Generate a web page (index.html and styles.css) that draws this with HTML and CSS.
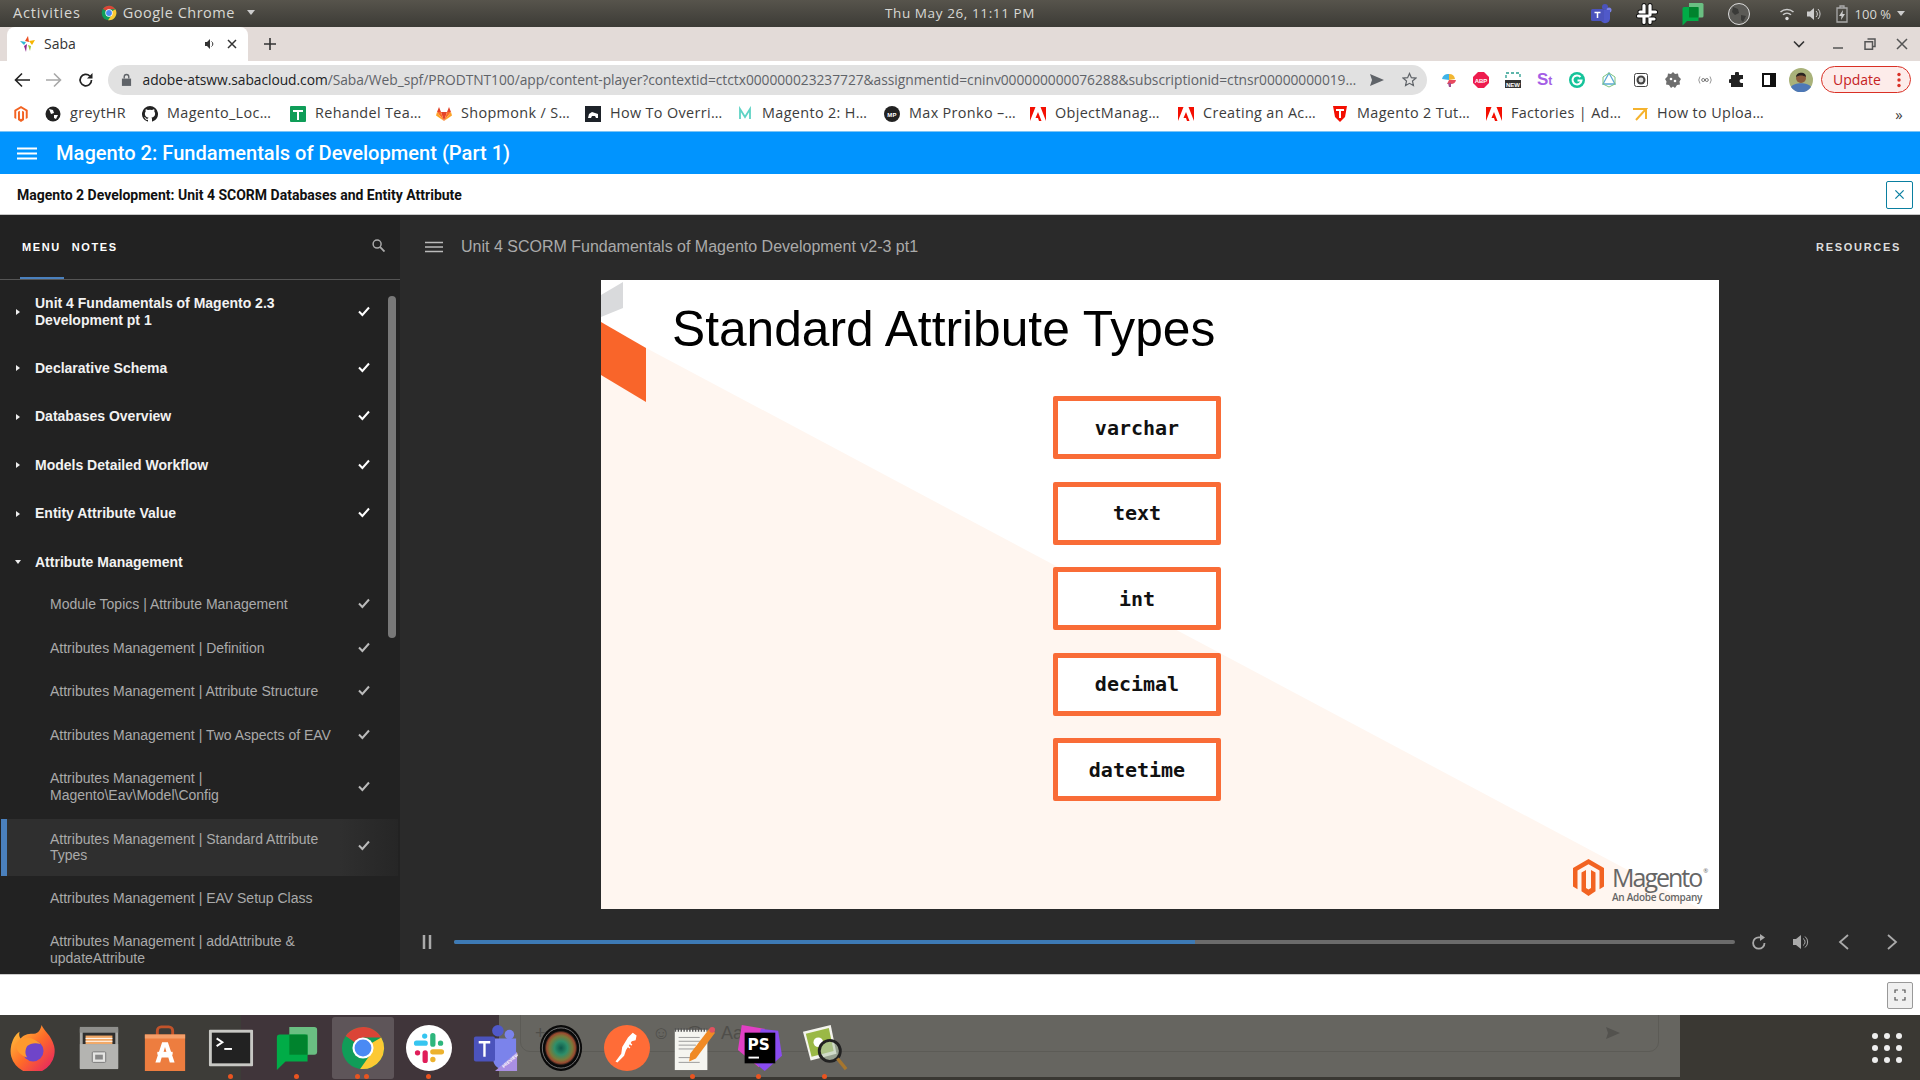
FILE: index.html
```html
<!DOCTYPE html>
<html lang="en">
<head>
<meta charset="utf-8">
<title>Saba</title>
<link rel="stylesheet" href="styles.css">
</head>
<body>
<svg class="defs" aria-hidden="true">
  <symbol id="check" viewBox="0 0 14 14"><path d="M2 7.5 5.4 11 12 3.5" fill="none" stroke="currentColor" stroke-width="2"/></symbol>
  <symbol id="mage" viewBox="0 0 31 37"><path fill="#f26322" d="M15.5 0 31 9v18.5l-4.500 2.700V11.500L15.500 5.200 4.500 11.500v18.700L0 27.500V9z"/><path fill="#f26322" d="M8.500 13.500 13 11v18l2.500 1.500L18 29V11l4.500 2.500v18.700L15.500 37l-7-4.800z"/></symbol>
  <symbol id="adobe" viewBox="0 0 16 16"><path fill="#f40f02" d="M0 1h5.500L0 15zM10.500 1H16v14zM8 6l3.500 9H9l-1-3H5.500z"/></symbol>
  <symbol id="chromelogo" viewBox="0 0 48 48">
    <circle cx="24" cy="24" r="22" fill="#109d58"/>
    <path fill="#db4437" d="M24 24 5.900 11.500A22 22 0 0 1 43.050 13H24z"/>
    <path fill="#fcc934" d="M24 24 43.050 13A22 22 0 0 1 21 45.800L30 33z"/>
    <circle cx="24" cy="24" r="11" fill="#fff"/><circle cx="24" cy="24" r="8.800" fill="#4a8af4"/>
  </symbol>
  <symbol id="gchat" viewBox="0 0 48 48">
    <path fill="#6abf82" d="M16 2h26a3 3 0 0 1 3 3v23a3 3 0 0 1-3 3H16z"/>
    <path fill="#00ac47" d="M3 13a3 3 0 0 1 3-3h26a3 3 0 0 1 3 3v25H12L3 47z"/>
    <path fill="#00832d" d="M16 10h19v21H16z"/>
  </symbol>
</svg>

<header class="topbar">
  <div class="top-left">
    <span>Activities</span>
    <span class="appname"><svg class="i15"><use href="#chromelogo"/></svg>Google Chrome<i class="caret-down"></i></span>
  </div>
  <div class="clock">Thu May 26, 11:11 PM</div>
  <div class="tray">
    <svg class="tray-i" viewBox="0 0 24 24"><circle cx="16" cy="5" r="3" fill="#4b53bc"/><circle cx="20" cy="8" r="2.500" fill="#7b83eb"/><path fill="#5059c9" d="M12 8h9v9a5 5 0 0 1-9 2z"/><rect x="2" y="7" width="13" height="12" rx="1.500" fill="#4b53bc"/><path stroke="#fff" stroke-width="1.500" d="M5.500 10.500h6M8.500 10.500V16"/></svg>
    <svg class="tray-i" viewBox="0 0 24 24"><g fill="none" stroke="#111" stroke-width="5" stroke-linecap="round"><path d="M9 3.500v6.500H5M15 3.500V13M20.500 10H15M3.500 14H13M9 14v6.500M15 20.500V17h4"/></g><g fill="none" stroke="#fff" stroke-width="3.200" stroke-linecap="round"><path d="M9 3.500v6.500H5M15 3.500V13M20.500 10H15M3.500 14H13M9 14v6.500M15 20.500V17h4"/></g></svg>
    <svg class="tray-i" viewBox="0 0 48 48"><use href="#gchat"/></svg>
    <svg class="tray-i" viewBox="0 0 24 24"><circle cx="12" cy="12" r="10.500" fill="#5b5a56" stroke="#ddd" stroke-width="1"/><path fill="#3a3a38" d="M6 5l5 2 1 4-4 2-3-3zM14 13l5 1-3 6-2-2z"/></svg>
    <svg class="tray-s wifi" viewBox="0 0 16 16"><g fill="none" stroke="#ccc" stroke-width="1.500"><path d="M1.500 6a9.500 9.500 0 0 1 13 0M4 8.800a6 6 0 0 1 8 0"/></g><circle cx="8" cy="12.500" r="1.700" fill="#ddd"/></svg>
    <svg class="tray-s vol" viewBox="0 0 16 16"><path fill="#ccc" d="M1 5.500h3L8 2v12L4 10.500H1z"/><path fill="none" stroke="#ccc" d="M10 5a4 4 0 0 1 0 6M12 3a7 7 0 0 1 0 10"/></svg>
    <svg class="tray-s bat" viewBox="0 0 12 18"><path fill="none" stroke="#aaa" stroke-width="1.300" d="M1 3h10v14H1zM4 3V1h4v2"/><path fill="#ccc" d="M7 5 3 11h2.500L5 15l4-6H6.500z"/></svg>
    <span class="pct">100 %</span><i class="caret-down"></i>
  </div>
</header>

<div class="tabstrip">
  <div class="tab">
    <svg class="i16" viewBox="0 0 16 16"><path fill="#ec4e20" d="M8 0l1 6-4-1z"/><path fill="#2bb6d4" d="M0 5l6 1-2 3z"/><path fill="#f7b500" d="M9 5l6-1-3 5z"/><path fill="#8e2a8e" d="M4 10l3-2-1 8z"/><path fill="#9dc83c" d="M8 9l3 1-1 5z"/></svg>
    <span class="tab-title">Saba</span>
    <svg class="tab-sound" viewBox="0 0 12 12"><path fill="#333" d="M1 4h2l3-3v10L3 8H1z"/><path fill="none" stroke="#333" d="M7.500 3.500a3 3 0 0 1 0 5"/></svg>
    <svg class="tab-x" viewBox="0 0 10 10"><path stroke="#333" stroke-width="1.500" d="M1 1l8 8M9 1 1 9"/></svg>
  </div>
  <svg class="newtab" viewBox="0 0 12 12"><path stroke="#333" stroke-width="1.600" d="M6 0v12M0 6h12"/></svg>
  <div class="win-ctrls">
    <svg class="w12 chev" viewBox="0 0 12 12"><path fill="none" stroke="#333" stroke-width="1.600" d="M1 3.500 6 8.500 11 3.500"/></svg>
    <svg class="w12" viewBox="0 0 12 12"><path stroke="#555" stroke-width="1.500" d="M1 10h10"/></svg>
    <svg class="w12" viewBox="0 0 12 12"><path fill="none" stroke="#555" stroke-width="1.500" d="M3.500 1h7.500v7.500H8.500M1 3.800h7.500v7.500H1z"/></svg>
    <svg class="w12" viewBox="0 0 12 12"><path stroke="#555" stroke-width="1.500" d="M1 1l10 10M11 1 1 11"/></svg>
  </div>
</div>

<div class="toolbar">
  <svg class="nav" viewBox="0 0 16 16"><path fill="none" stroke="#222" stroke-width="1.600" d="M8 1.500 1.500 8 8 14.500M2 8h14"/></svg>
  <svg class="nav" viewBox="0 0 16 16"><path fill="none" stroke="#a8a8a8" stroke-width="1.600" d="M8 1.500 14.500 8 8 14.500M14 8H0"/></svg>
  <svg class="nav" viewBox="0 0 16 16"><path fill="none" stroke="#222" stroke-width="1.700" d="M13.500 8a5.700 5.700 0 1 1-1.700-4"/><path fill="#222" d="M14.500 1v5.500H9z"/></svg>
  <div class="omnibox">
    <svg class="lock" viewBox="0 0 12 14"><path fill="#5f6368" d="M1 6h10v8H1z"/><path fill="none" stroke="#5f6368" stroke-width="1.500" d="M3.500 6V4a2.500 2.500 0 0 1 5 0v2"/></svg>
    <span class="url"><b>adobe-atsww.sabacloud.com</b>/Saba/Web_spf/PRODTNT100/app/content-player?contextid=ctctx000000023237727&amp;assignmentid=cninv000000000076288&amp;subscriptionid=ctnsr00000000019…</span>
    <svg class="omni-i send" viewBox="0 0 14 14"><path fill="#5f6368" d="M0 1l14 6-14 6 2-6z"/></svg>
    <svg class="omni-i" viewBox="0 0 16 16"><path fill="none" stroke="#5f6368" stroke-width="1.300" d="M8 1.500l2 4.500 4.800.5-3.600 3.200 1 4.800L8 12.100l-4.200 2.400 1-4.800L1.200 6.500 6 6z"/></svg>
  </div>
  <div class="exts">
    <svg class="ext" viewBox="0 0 16 16"><path fill="#3fb4e8" d="M1 7a6 6 0 0 1 7-5v6z"/><path fill="#f2b632" d="M8 2a6 6 0 0 1 6 5l-6 1z"/><path fill="#e84a5f" d="M8 8h7a5 5 0 0 1-5 4H6z"/><path fill="#a04d8f" d="M7 11h3v4H8z"/></svg>
    <svg class="ext" viewBox="0 0 16 16"><path fill="#ee1c4e" d="M5 0h6l5 5v6l-5 5H5l-5-5V5z"/><text x="8" y="10.500" class="abp">ABP</text></svg>
    <svg class="ext" viewBox="0 0 16 16"><rect y="8" width="16" height="8" fill="#333"/><path fill="none" stroke="#2a9d8f" stroke-width="1.300" stroke-dasharray="3 2" d="M1 6V1h14v5"/><text x="8" y="15" class="abp">NEW</text></svg>
    <span class="ext-st">S<small>t</small></span>
    <svg class="ext" viewBox="0 0 16 16"><circle cx="8" cy="8" r="8" fill="#15c39a"/><path fill="none" stroke="#fff" stroke-width="2" d="M11.500 5a4.500 4.500 0 1 0 1 3.500H8.500"/></svg>
    <svg class="ext" viewBox="0 0 16 16"><path fill="none" stroke="#5aa9d6" stroke-width="1.300" d="M8 1l6 11H2z"/><path fill="none" stroke="#7cc47f" stroke-width="1" d="M8 1l6 4v7l-6 3-6-3V5z"/></svg>
    <svg class="ext" viewBox="0 0 16 16"><rect x="1.500" y="1.500" width="13" height="13" rx="2" fill="#fff" stroke="#444"/><circle cx="8" cy="8" r="4.500" fill="#444"/><circle cx="8" cy="8" r="2.400" fill="#ddd"/></svg>
    <svg class="ext" viewBox="0 0 16 16"><path fill="#6e6e6e" d="M8 0l2 2 3-.5 .5 3L16 7l-1.500 2.500.5 3-3 .5L10 16l-2-1.500L6 16l-2-3-3-.5.5-3L0 7l2.500-2.500L3 1.500l3 .5z"/><circle cx="6" cy="7" r="1.300" fill="#fff"/><circle cx="10" cy="9" r="1.300" fill="#fff"/></svg>
    <svg class="ext" viewBox="0 0 16 16"><path fill="none" stroke="#999" d="M3 4.500a6 6 0 0 0 0 7M13 4.500a6 6 0 0 1 0 7"/><circle cx="6.200" cy="8" r="1.500" fill="none" stroke="#777"/><circle cx="9.800" cy="8" r="1.500" fill="none" stroke="#777"/></svg>
    <svg class="ext" viewBox="0 0 16 16"><path fill="#222" d="M6 1.500a2 2 0 0 1 4 0V3h4v4h-1.500a2 2 0 0 0 0 4H14v4H2v-4h-.5a2 2 0 0 1 0-4H2V3h4z"/></svg>
    <svg class="ext" viewBox="0 0 16 16"><path fill="#111" d="M1 1h14v14H1z"/><path fill="#fff" d="M3 3h6v10H3z"/></svg>
    <svg class="avatar" viewBox="0 0 24 24"><circle cx="12" cy="12" r="12" fill="#a9b27a"/><path fill="#4d78b6" d="M2 19c3-5 17-5 20 0a12 12 0 0 1-20 0z"/><circle cx="12" cy="10" r="5" fill="#8a5c3c"/><path fill="#2a2320" d="M7 9c0-5 10-6 10 0-3-2-7-2-10 0z"/></svg>
  </div>
  <div class="update"><span>Update</span><svg class="dots" viewBox="0 0 4 16"><circle cx="2" cy="2.500" r="1.700"/><circle cx="2" cy="8" r="1.700"/><circle cx="2" cy="13.500" r="1.700"/></svg></div>
</div>

<nav class="bookmarks">
  <div class="bm"><svg class="bi"><use href="#mage"/></svg></div>
  <div class="bm"><svg class="bi" viewBox="0 0 16 16"><circle cx="8" cy="8" r="7.500" fill="#222"/><path fill="#fff" d="M4 3l4 1 1 3-3 1zM9 9l4 0-2 4-2-1z"/></svg><span>greytHR</span></div>
  <div class="bm"><svg class="bi" viewBox="0 0 16 16"><path fill="#222" d="M8 0a8 8 0 0 0-2.500 15.600c.4.100.5-.2.500-.4v-1.400c-2.200.5-2.700-1-2.700-1-.4-.9-.9-1.200-.9-1.200-.7-.5.100-.5.100-.5.800.1 1.200.8 1.200.8.700 1.200 1.900.9 2.300.7.100-.5.300-.9.500-1.100-1.800-.2-3.600-.9-3.600-4 0-.9.300-1.600.8-2.100-.1-.2-.4-1 .1-2.100 0 0 .7-.2 2.200.8a7.600 7.600 0 0 1 4 0c1.500-1 2.200-.8 2.200-.8.400 1.100.200 1.900.1 2.100.5.600.8 1.300.8 2.100 0 3.100-1.900 3.800-3.700 4 .3.300.6.800.6 1.500v2.200c0 .2.100.5.500.4A8 8 0 0 0 8 0z"/></svg><span>Magento_Loc…</span></div>
  <div class="bm"><svg class="bi" viewBox="0 0 16 16"><rect width="16" height="16" rx="1" fill="#0f9d58"/><path stroke="#fff" stroke-width="2" d="M3 5h10M8 5v9"/></svg><span>Rehandel Tea…</span></div>
  <div class="bm"><svg class="bi" viewBox="0 0 16 16"><path fill="#e24329" d="M8 15 5 6h6z"/><path fill="#fc6d26" d="M8 15 5 6H1zM8 15l3-9h4z"/><path fill="#fca326" d="M1 6 0 9.500 8 15zM15 6l1 3.500L8 15z"/><path fill="#e24329" d="M1 6l2-5 2 5zM15 6l-2-5-2 5z"/></svg><span>Shopmonk / S…</span></div>
  <div class="bm"><svg class="bi" viewBox="0 0 16 16"><rect width="16" height="16" fill="#1d2229"/><path fill="#fff" d="M3 12l1-4 3-2 3 1 3 1v4h-2l-1-2-3 0-1 2z"/></svg><span>How To Overri…</span></div>
  <div class="bm"><svg class="bi" viewBox="0 0 16 16"><path fill="none" stroke="#5fd3c5" stroke-width="1.800" d="M3 13V3l5 8 5-8v10"/></svg><span>Magento 2: H…</span></div>
  <div class="bm"><svg class="bi" viewBox="0 0 16 16"><circle cx="8" cy="8" r="8" fill="#222"/><text x="8" y="10.500" class="abp">MP</text></svg><span>Max Pronko –…</span></div>
  <div class="bm"><svg class="bi"><use href="#adobe"/></svg><span>ObjectManag…</span></div>
  <div class="bm"><svg class="bi"><use href="#adobe"/></svg><span>Creating an Ac…</span></div>
  <div class="bm"><svg class="bi" viewBox="0 0 16 16"><path fill="#f40f02" d="M1 0h14l-2 11-5 5-5-5z"/><path fill="#fff" d="M4 3h8v2H9v7H7V5H4z"/></svg><span>Magento 2 Tut…</span></div>
  <div class="bm"><svg class="bi"><use href="#adobe"/></svg><span>Factories | Ad…</span></div>
  <div class="bm"><svg class="bi" viewBox="0 0 16 16"><path fill="none" stroke="#f5b32e" stroke-width="2" d="M1 3h13L4 14M14 3v10"/></svg><span>How to Uploa…</span></div>
  <div class="bm more">»</div>
</nav>

<div class="course-bar">
  <svg class="burger" viewBox="0 0 20 13"><path stroke="#fff" stroke-width="1.800" d="M0 1.500h20M0 6.500h20M0 11.500h20"/></svg>
  <h1>Magento 2: Fundamentals of Development (Part 1)</h1>
</div>

<div class="sub-bar">
  <strong>Magento 2 Development: Unit 4 SCORM Databases and Entity Attribute</strong>
  <div class="closebtn"><svg viewBox="0 0 12 12"><path stroke="#0a7fa0" stroke-width="1.400" d="M1.500 1.500l9 9M10.500 1.500l-9 9"/></svg></div>
</div>

<main class="player">
  <aside class="side">
    <div class="side-tabs">
      <span class="stab on">MENU</span><span class="stab">NOTES</span>
      <svg class="search" viewBox="0 0 14 14"><circle cx="5.500" cy="5.500" r="4.300" fill="none" stroke="#aaa" stroke-width="1.600"/><path stroke="#aaa" stroke-width="2" d="M8.800 8.800 13.500 13.500"/></svg>
    </div>
    <div class="list">
      <div class="row top h64"><i class="tri"></i><span class="label">Unit 4 Fundamentals of Magento 2.3 Development pt 1</span><svg class="ck"><use href="#check"/></svg></div>
      <div class="row top"><i class="tri"></i><span class="label">Declarative Schema</span><svg class="ck"><use href="#check"/></svg></div>
      <div class="row top"><i class="tri"></i><span class="label">Databases Overview</span><svg class="ck"><use href="#check"/></svg></div>
      <div class="row top"><i class="tri"></i><span class="label">Models Detailed Workflow</span><svg class="ck"><use href="#check"/></svg></div>
      <div class="row top"><i class="tri"></i><span class="label">Entity Attribute Value</span><svg class="ck"><use href="#check"/></svg></div>
      <div class="row top open"><i class="tri down"></i><span class="label">Attribute Management</span></div>
      <div class="row sub"><span class="label">Module Topics | Attribute Management</span><svg class="ck"><use href="#check"/></svg></div>
      <div class="row sub"><span class="label">Attributes Management | Definition</span><svg class="ck"><use href="#check"/></svg></div>
      <div class="row sub"><span class="label">Attributes Management | Attribute Structure</span><svg class="ck"><use href="#check"/></svg></div>
      <div class="row sub"><span class="label">Attributes Management | Two Aspects of EAV</span><svg class="ck"><use href="#check"/></svg></div>
      <div class="row sub two"><span class="label">Attributes Management | Magento\Eav\Model\Config</span><svg class="ck"><use href="#check"/></svg></div>
      <div class="row sub current"><span class="label">Attributes Management | Standard Attribute Types</span><svg class="ck"><use href="#check"/></svg></div>
      <div class="row sub"><span class="label">Attributes Management | EAV Setup Class</span></div>
      <div class="row sub two"><span class="label">Attributes Management | addAttribute &amp; updateAttribute</span></div>
    </div>
    <div class="thumb"></div>
  </aside>
  <section class="stage">
    <div class="stage-head">
      <svg class="burger small" viewBox="0 0 20 13"><path stroke="#bbb" stroke-width="1.800" d="M0 1.500h20M0 6.500h20M0 11.500h20"/></svg>
      <span class="lesson">Unit 4 SCORM Fundamentals of Magento Development v2-3 pt1</span>
      <span class="resources">RESOURCES</span>
    </div>
    <div class="slide">
      <svg class="slide-bg" viewBox="0 0 1118 629" preserveAspectRatio="none">
        <path fill="#fff6f0" d="M0 44 1100 629H0z"/>
        <path fill="#d9dadc" d="M0 15 22 2v26L0 37z"/>
        <path fill="#f9652a" d="M0 42 45 68v54L0 95z"/>
      </svg>
      <h2>Standard Attribute Types</h2>
      <div class="types">
        <div class="type">varchar</div>
        <div class="type">text</div>
        <div class="type">int</div>
        <div class="type">decimal</div>
        <div class="type">datetime</div>
      </div>
      <div class="brand">
        <svg class="brand-mark"><use href="#mage"/></svg>
        <div class="brand-text"><span class="brand-name">Magento<sup>®</sup></span><span class="brand-tag">An Adobe Company</span></div>
      </div>
    </div>
    <div class="controls">
      <svg class="pause" viewBox="0 0 10 14"><path stroke="#aaa" stroke-width="2.500" d="M2 0v14M8 0v14"/></svg>
      <div class="progress"><div class="played"></div></div>
      <svg class="ctl replay" viewBox="0 0 16 16"><path fill="none" stroke="#aaa" stroke-width="1.800" d="M13.500 9a5.700 5.700 0 1 1-5.700-5.700H10"/><path fill="#aaa" d="M9 0l5 3.500L9 7z"/></svg>
      <svg class="ctl vol2" viewBox="0 0 16 16"><path fill="#aaa" d="M0 5h3l5-4v14l-5-4H0z"/><path fill="none" stroke="#aaa" d="M10 4.500a4 4 0 0 1 0 7M12 2.500a7 7 0 0 1 0 11"/></svg>
      <svg class="ctl prev" viewBox="0 0 12 16"><path fill="none" stroke="#aaa" stroke-width="1.800" d="M10 1 2 8l8 7"/></svg>
      <svg class="ctl next" viewBox="0 0 12 16"><path fill="none" stroke="#aaa" stroke-width="1.800" d="M2 1l8 7-8 7"/></svg>
    </div>
  </section>
</main>

<footer class="foot">
  <div class="fs"><svg viewBox="0 0 12 12"><path fill="none" stroke="#555" stroke-width="1.200" d="M1 4V1h3M8 1h3v3M11 8v3H8M4 11H1V8"/></svg></div>
</footer>

<div class="dock">
  <div class="ghost">
    <div class="ghost-frame">
      <span class="g1">+</span><span class="g2">☺</span><span class="g3">@</span><span class="g4">Aa</span>
      <svg class="g5" viewBox="0 0 14 14"><path fill="#53524e" d="M0 1l14 6-14 6 2-6z"/></svg>
    </div>
  </div>
  <div class="slot">
    <svg viewBox="0 0 48 48"><defs><linearGradient id="ff" x1="0" y1="0" x2="1" y2="1"><stop offset="0" stop-color="#ffd23e"/><stop offset=".5" stop-color="#ff6b28"/><stop offset="1" stop-color="#e3196b"/></linearGradient></defs><path fill="url(#ff)" d="M33 0c2 6 10 10 13 22a23 23 0 1 1-45 1C2 16 6 9 10 7c-1 3 0 6 1 7 4-5 10-5 14-5 5 0 7-5 8-9z"/><circle cx="24" cy="27" r="11" fill="#6f45c9"/><path fill="#ff9a2e" d="M6 20c5-6 13-8 19-5 3 1 5 3 7 5-5-2-11-1-14 2-2 3-3 8 0 12-7-2-12-8-12-14z"/></svg>
  </div>
  <div class="slot">
    <svg viewBox="0 0 48 48"><rect x="4" y="2" width="40" height="44" rx="2" fill="#a9a9a6"/><rect x="4" y="2" width="40" height="6" fill="#8f8f8c"/><rect x="7" y="8" width="34" height="12" fill="#2e2e2e"/><rect x="10" y="11" width="28" height="9" fill="#f1a968"/><path stroke="#fff" d="M10 14h28M10 17h28"/><rect x="4" y="20" width="40" height="26" fill="#b4b4b1"/><rect x="17" y="28" width="14" height="11" rx="1" fill="#e4e4e2" stroke="#777"/><rect x="20" y="31" width="8" height="5" fill="#888"/></svg>
  </div>
  <div class="slot">
    <svg viewBox="0 0 48 48"><path fill="none" stroke="#c2532a" stroke-width="3" d="M16 12V6a4 4 0 0 1 4-4h8a4 4 0 0 1 4 4v6"/><path fill="#ed7d3f" d="M3 10h42v38H3z"/><path fill="#f59f6a" d="M3 10h42L45 14H3z"/><path fill="#fff" d="M21 18h6l7 21h-5l-1.500-5h-7L19 39h-5zM24 23l-2 7h4z"/><rect x="16" y="28" width="16" height="3" fill="#fff"/></svg>
  </div>
  <div class="slot">
    <svg viewBox="0 0 48 48"><rect x="1" y="5" width="46" height="38" rx="1" fill="#c8c8c4"/><rect x="4" y="8" width="40" height="32" fill="#222"/><path fill="none" stroke="#fff" stroke-width="2" d="M9 14l6 4-6 4"/><path stroke="#fff" stroke-width="2" d="M17 25h8"/></svg>
    <i class="run one"></i>
  </div>
  <div class="slot">
    <svg viewBox="0 0 48 48"><use href="#gchat"/></svg>
    <i class="run one"></i>
  </div>
  <div class="slot on">
    <svg viewBox="0 0 48 48"><use href="#chromelogo"/></svg>
    <i class="run a"></i><i class="run b"></i>
  </div>
  <div class="slot">
    <svg viewBox="0 0 48 48"><circle cx="24" cy="24" r="24" fill="#fff"/><g stroke-width="5.500" stroke-linecap="round" fill="none"><path stroke="#36c5f0" d="M11 19h9M19.500 11.500v.1"/><path stroke="#2eb67d" d="M28 11v9M36 19h.1"/><path stroke="#e01e5a" d="M20 29v8M12 29h.1"/><path stroke="#ecb22e" d="M28 28h9M28 36h.1"/></g></svg>
    <i class="run one"></i>
  </div>
  <div class="slot">
    <svg viewBox="0 0 48 48"><circle cx="27" cy="6" r="6" fill="#5059c9"/><circle cx="39" cy="10" r="5" fill="#7b83eb"/><path fill="#7b83eb" d="M20 14h26v20a12 12 0 0 1-24 2z"/><rect x="2" y="12" width="22" height="26" rx="2" fill="#4b53bc"/><path stroke="#fff" stroke-width="2.500" d="M7 18h12M13 18v15"/><path fill="#a98fe3" d="M24 48 47 28v20z"/><text x="33" y="45" class="prev-t" transform="rotate(-40 33 45)">PREVIEW</text></svg>
  </div>
  <div class="slot">
    <svg viewBox="0 0 48 48"><defs><radialGradient id="lens"><stop offset="0" stop-color="#0c5a4c"/><stop offset=".4" stop-color="#2f8f6a"/><stop offset=".7" stop-color="#7a7a3a"/><stop offset=".88" stop-color="#9a4a30"/><stop offset="1" stop-color="#111"/></radialGradient></defs><ellipse cx="24" cy="24" rx="22" ry="24" fill="#0a0a0a"/><ellipse cx="24" cy="24" rx="19.500" ry="21" fill="none" stroke="#777"/><ellipse cx="24" cy="24" rx="17" ry="18" fill="url(#lens)"/></svg>
  </div>
  <div class="slot">
    <svg viewBox="0 0 48 48"><circle cx="24" cy="24" r="24" fill="#ff6c37"/><path fill="#fff" d="M30 8l4 3-1 5-4 1-6 9-2 6-7 7-2-1 6-8 1-7 6-10z"/><path stroke="#fff" stroke-width="1.500" d="M26 18l3 3M24 21l3 3"/></svg>
  </div>
  <div class="slot">
    <svg viewBox="0 0 48 48"><rect x="5" y="5" width="34" height="42" fill="#f5f5f0"/><path stroke="#555" stroke-dasharray="1.500 1.500" stroke-width="4" d="M5 5h34"/><path stroke="#999" stroke-width="1" d="M9 13h22M9 17h26M9 21h18M9 25h24M9 34h16M9 39h22"/><path fill="#f08a24" d="M41 4l6 4-20 27-7 3 1-8z"/><circle cx="44" cy="5" r="3" fill="#e05260"/></svg>
    <i class="run one"></i>
  </div>
  <div class="slot">
    <svg viewBox="0 0 48 48"><path fill="#e13fc4" d="M6 0l24 4-6 40L2 26z"/><path fill="#8a4cf0" d="M26 4l18 2 4 26-18 16-12-10z"/><rect x="9" y="8" width="32" height="32" fill="#000"/><text x="12" y="26" class="ps">PS</text><path stroke="#fff" stroke-width="2" d="M13 34h11"/></svg>
    <i class="run one"></i>
  </div>
  <div class="slot">
    <svg viewBox="0 0 48 48"><path fill="#f4f4ee" d="M1 7l29-7 6 30-27 7z"/><path fill="#9ab846" d="M4 9l24-6 5 24-23 6z"/><circle cx="17" cy="18" r="5" fill="#fff"/><circle cx="29" cy="27" r="11" fill="#b8c9b0" fill-opacity=".6" stroke="#222" stroke-width="3"/><path stroke="#a6762e" stroke-width="3.500" d="M37 35l9 11"/></svg>
    <i class="run one"></i>
  </div>
  <div class="apps"><i></i><i></i><i></i><i></i><i></i><i></i><i></i><i></i><i></i></div>
</div>
</body>
</html>
```
FILE: styles.css
```css
* { box-sizing: border-box; }
html, body { margin: 0; padding: 0; }
body {
  width: 1920px; height: 1080px; overflow: hidden;
  display: flex; flex-direction: column;
  font-family: "Liberation Sans", Arial, sans-serif;
  background: #fff;
}
.defs { position: absolute; width: 0; height: 0; }
svg { display: block; flex: none; }
i { display: block; }

/* system bar */
.topbar {
  height: 27px; flex: none;
  display: grid; grid-template-columns: 1fr auto 1fr; align-items: center;
  background: linear-gradient(180deg, #57544c, #3c3b36);
  color: #d8d8d4; font: 500 14px "Open Sans", "Noto Sans", sans-serif;
}
.top-left { display: flex; align-items: center; gap: 20px; padding: 0 0 2px 13px; font-size: 14.500px; letter-spacing: .8px; }
.appname { display: flex; align-items: center; gap: 6px; letter-spacing: .5px; }
.i15 { width: 16px; height: 16px; }
.caret-down { width: 0; height: 0; border: 4.500px solid transparent; border-top: 5px solid #ccc; border-bottom: 0; margin-left: 6px; }
.clock { font-size: 13.500px; letter-spacing: .6px; padding-bottom: 2px; }
.tray { display: flex; align-items: center; justify-content: flex-end; padding-right: 15px; }
.tray-i { width: 24px; height: 24px; margin-right: 22px; }
.tray-s { width: 16px; height: 16px; margin-right: 11px; }
.tray-s.wifi { margin-left: 6px; }
.tray-s.bat { width: 12px; height: 18px; margin-right: 7px; margin-left: 3px; }
.pct { font-size: 13px; }

/* tabs */
.tabstrip { height: 34px; flex: none; background: #e3dbd8; display: flex; align-items: center; padding-left: 7px; }
.tab {
  width: 241px; height: 34px; background: #fff; border-radius: 8px 8px 0 0;
  display: flex; align-items: center; padding-left: 13px;
}
.i16 { width: 16px; height: 16px; }
.tab-title { margin: -2px 0 0 8px; font: 14px "Open Sans", sans-serif; color: #333; flex: 1; }
.tab-sound { width: 12px; height: 12px; margin-right: 11px; }
.tab-x { width: 10px; height: 10px; margin-right: 11px; }
.newtab { width: 12px; height: 12px; margin-left: 16px; }
.win-ctrls { margin-left: auto; display: flex; align-items: center; gap: 20px; padding-right: 12px; }
.w12 { width: 12px; height: 12px; }
.chev { margin-right: 7px; }

/* toolbar */
.toolbar { height: 37px; flex: none; display: flex; align-items: center; padding: 0 9px 0 14px; background: #fff; }
.nav { width: 16px; height: 16px; margin-right: 16px; }
.omnibox {
  width: 1319px; height: 30px; margin-left: -2px; border-radius: 15px; background: #e1e1e1;
  display: flex; align-items: center; padding-left: 13px;
}
.lock { width: 11px; height: 13px; flex: none; }
.url { width: 1220px; margin-left: 10.500px; white-space: nowrap; font: 13.800px "Open Sans", sans-serif; color: #5f6368; letter-spacing: -.04px; }
.url b { font-weight: 400; color: #202124; }
.omni-i { width: 15px; height: 15px; margin-left: 11px; }
.send { margin-left: 7px; width: 14px; height: 14px; }
.omni-i + .omni-i { margin-left: 18px; }
.exts { display: flex; align-items: center; gap: 16px; margin-left: 14px; }
.ext { width: 16px; height: 16px; }
.ext-st { width: 16px; height: 18px; flex: none; font: bold 17px/18px "Liberation Sans", sans-serif; color: #a45ee5; white-space: nowrap; margin: -1px 0; }
.ext-st small { font-size: 12px; }
.abp { font: bold 6px "Liberation Sans", sans-serif; fill: #fff; text-anchor: middle; }
.avatar { width: 24px; height: 24px; margin-left: -4px; }
.update {
  margin-left: 8px; width: 90px; height: 27px; border: 1px solid #d93025; border-radius: 14px; background: #fdecea;
  display: flex; align-items: center; padding-left: 11px; color: #c5221f; font: 14px "Open Sans", sans-serif;
}
.dots { width: 4px; height: 16px; margin-left: auto; margin-right: 9px; fill: #d93025; }

/* bookmarks */
.bookmarks {
  height: 33px; flex: none; padding: 0 0 2px 13px; background: #fff;
  display: grid; align-items: center;
  grid-template-columns: 32px 97px 148px 146px 149px 152px 147px 146px 148px 154px 154px 146px 146px 1fr;
  font: 14.400px "Open Sans", sans-serif; color: #3c3c3c;
}
.bm { display: flex; align-items: center; gap: 9px; white-space: nowrap; letter-spacing: .35px; }
.bm span { margin-top: -3px; }
.bi { width: 16px; height: 16px; }
.more { justify-content: flex-end; padding-right: 17px; font-size: 15px; }

/* course bar */
.course-bar { height: 43px; flex: none; background: #0194fe; border-top: 1px solid #7cc4f5; display: flex; align-items: center; padding-left: 17px; color: #fff; }
.burger { width: 20px; height: 13px; }
.course-bar h1 { margin: 0 0 0 19px; font: 500 20.100px Roboto, sans-serif; }
.sub-bar { height: 41px; flex: none; background: #fff; border-bottom: 1px solid #c8c8c8; display: flex; align-items: center; padding: 1px 7px 0 17px; }
.sub-bar strong { font: 700 14px Roboto, sans-serif; color: #111; }
.closebtn { margin-left: auto; width: 27px; height: 28px; border: 1px solid #0a7fa0; border-radius: 2px; display: flex; align-items: center; justify-content: center; }
.closebtn svg { width: 11px; height: 11px; }

/* player */
.player { height: 759px; flex: none; display: flex; background: #2a2a2a; }
.side { width: 400px; flex: none; background: #222; position: relative; overflow: hidden; }
.side-tabs { height: 65px; border-bottom: 1px solid #555; display: flex; align-items: center; padding: 0 15px 0 22px; gap: 11px; }
.stab { position: relative; color: #fff; font-size: 11px; font-weight: 700; letter-spacing: 1.600px; }
.stab.on::after { content: ""; position: absolute; left: -2px; right: -3px; bottom: -26px; height: 2px; background: #4a80bd; }
.search { width: 13px; height: 13px; margin-left: auto; margin-top: -4px; }
.row { display: flex; align-items: center; padding-right: 29px; }
.row:last-child { padding-bottom: 2px; }
.label { width: 295px; }
.ck { width: 14px; height: 14px; margin-left: auto; margin-top: -3px; }
.top { height: 48.500px; color: #f2f2f2; font-size: 14px; font-weight: 700; line-height: 17px; padding-left: 16px; }
.top .ck { color: #fff; }
.h64 { height: 64px; }
.open { height: 45px; padding-top: 3px; }
.tri { width: 0; height: 0; border: 3.500px solid transparent; border-left: 4px solid #eee; border-right: 0; margin-right: 15px; }
.tri.down { border: 3.500px solid transparent; border-top: 4px solid #eee; border-bottom: 0; margin-left: -1px; margin-right: 14px; }
.sub { height: 43.500px; color: #aaa; font-size: 14px; line-height: 17px; padding-left: 50px; }
.sub .ck { color: #bbb; }
.two { height: 60px; }
.current { height: 57px; margin: 1.500px 2px 1.500px 1px; padding-left: 43px; padding-right: 27px; padding-bottom: 1px; border-left: 6px solid #4a80bd; background: linear-gradient(90deg, #2f2f2f 85%, #262626); line-height: 16px; }
.thumb { position: absolute; left: 388px; top: 81px; width: 8px; height: 342px; border-radius: 4px; background: #787878; }

.stage { flex: 1; display: flex; flex-direction: column; min-width: 0; }
.stage-head { height: 65px; flex: none; display: flex; align-items: center; padding: 0 19px 1px 25px; }
.burger.small { width: 18px; height: 12px; }
.lesson { margin-left: 18px; color: #aaa; font-size: 16px; }
.resources { margin-left: auto; color: #ddd; font-size: 11px; font-weight: 700; letter-spacing: 1.700px; }

.slide { position: relative; width: 1118px; height: 629px; flex: none; margin-left: 201px; background: #fff; padding: 19px 0 0 71px; overflow: hidden; }
.slide-bg { position: absolute; inset: 0; width: 100%; height: 100%; }
.slide h2 { position: relative; margin: 0; font-size: 49.700px; font-weight: 400; line-height: 60px; color: #000; }
.types { position: relative; margin: 37px 0 0 381px; width: 168px; display: flex; flex-direction: column; gap: 22.500px; }
.type { height: 63px; border: 5px solid #f96c37; border-radius: 2px; background: #fff; display: flex; align-items: center; justify-content: center; font: 700 20px "DejaVu Sans Mono", monospace; color: #111; }
.brand { position: absolute; left: 972px; top: 579px; display: flex; gap: 8px; align-items: flex-start; }
.brand-mark { width: 31px; height: 37px; }
.brand-text { display: flex; flex-direction: column; margin-top: 5px; color: #666; }
.brand-name { font: 400 25px/27px "Open Sans", sans-serif; letter-spacing: -2px; }
.brand-name sup { font-size: 6px; letter-spacing: 0; vertical-align: 14px; line-height: 0; margin-left: 2px; }
.brand-tag { font: 600 10px/13px "Open Sans", sans-serif; letter-spacing: -.3px; }

.controls { flex: 1; display: flex; align-items: center; padding: 0 20px 0 22px; }
.pause { width: 10px; height: 14px; }
.progress { width: 1281px; height: 4px; margin-left: 22px; background: #6b6b6b; border-radius: 2px; }
.played { width: 741px; height: 4px; background: #3d7ab5; border-radius: 2px 0 0 2px; }
.ctl { height: 16px; width: 16px; }
.replay { margin-left: 16px; }
.vol2 { margin-left: 26px; }
.prev { margin-left: 29px; width: 12px; }
.next { margin-left: 36px; width: 12px; }

.foot { height: 41px; flex: none; background: #fff; border-top: 1px solid #ccc; display: flex; align-items: center; justify-content: flex-end; padding-right: 7px; }
.fs { width: 26px; height: 27px; border: 1px solid #999; border-radius: 2px; background: #f0f0f0; display: flex; align-items: center; justify-content: center; }
.fs svg { width: 12px; height: 12px; }

/* dock */
.dock {
  height: 65px; flex: none; position: relative; display: flex; align-items: center;
  background: linear-gradient(90deg, #3d3c38 0 241px, #40353a 241px 499px, #3a3833 499px);
}
.ghost { position: absolute; left: 499px; width: 1181px; top: 0; bottom: 3px; background: #666560; overflow: hidden; }
.ghost-frame { position: absolute; left: 21px; right: 21px; top: -20px; height: 57px; border: 1px solid #5c5b56; border-radius: 10px; color: #4f4e4a; }
.ghost-frame span { position: absolute; top: 26px; font-size: 18px; line-height: 22px; }
.g1 { left: 14px; } .g2 { left: 131px; } .g3 { left: 164px; } .g4 { left: 200px; }
.g5 { position: absolute; right: 38px; top: 30px; width: 14px; height: 14px; }
.slot { position: relative; width: 66px; height: 65px; flex: none; display: flex; align-items: center; justify-content: center; }
.slot > svg { width: 46px; height: 46px; position: relative; }
.slot.on::before { content: ""; position: absolute; inset: 2px 2px 1px 2px; background: rgba(255,255,255,.16); border-radius: 3px; }
.run { position: absolute; bottom: 1px; width: 5px; height: 5px; border-radius: 50%; background: #e95420; }
.run.one { left: 30px; }
.run.a { left: 25px; } .run.b { left: 34px; }
.prev-t { font: 700 4.500px "Liberation Sans", sans-serif; fill: #fff; }
.ps { font: 700 16px "DejaVu Sans", sans-serif; fill: #fff; }
.apps { position: relative; margin-left: auto; margin-right: 18px; display: grid; grid-template-columns: repeat(3, 6px); gap: 6px; }
.apps i { width: 6px; height: 6px; border-radius: 50%; background: #eee; }
```
